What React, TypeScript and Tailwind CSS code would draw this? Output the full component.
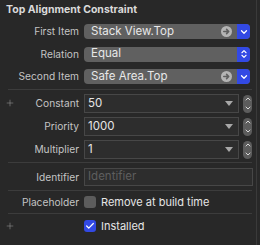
import { ChevronDown, ChevronUp, ChevronsUpDown, Check, Plus } from "lucide-react";

const font = { fontFamily: "Inter, 'Liberation Sans', sans-serif" };

function ArrowCircle() {
  return (
    <svg width="11" height="11" viewBox="0 0 11 11">
      <circle cx="5.5" cy="5.5" r="5.5" fill="#b4b4b4" />
      <path d="M2.8 5.5 H7.6 M5.6 3.4 L7.7 5.5 L5.6 7.6" stroke="#5f5f5f" strokeWidth="1.6" fill="none" strokeLinecap="round" strokeLinejoin="round" />
    </svg>
  );
}

function Stepper() {
  return (
    <div className="w-[9px] h-[18px] rounded-full bg-[#5c5c5c] flex flex-col items-center justify-center gap-[1px]">
      <ChevronUp size={8} strokeWidth={3} className="text-[#d8d8d8]" />
      <ChevronDown size={8} strokeWidth={3} className="text-[#d8d8d8]" />
    </div>
  );
}

function Label({ text, plus }: { text: string; plus?: boolean }) {
  return (
    <div className="w-[84px] shrink-0 flex items-center justify-between pl-[5px] pr-[5px]">
      <span className="w-[10px] flex items-center">
        {plus && <Plus size={10} strokeWidth={1.3} className="text-[#9a9a9a]" />}
      </span>
      <span className="text-[10.2px] text-[#c4c4c4] leading-none">{text}</span>
    </div>
  );
}

function ItemPopup({ value, arrow, updown }: { value: string; arrow?: boolean; updown?: boolean }) {
  return (
    <div className="w-[166px] h-[15px] rounded-[4px] bg-[#606060] flex items-center overflow-hidden">
      <span className="flex-1 pl-[7px] text-[11.5px] text-[#e8e8e8] leading-none">{value}</span>
      {arrow && (
        <span className="mr-[5px] flex">
          <ArrowCircle />
        </span>
      )}
      <span className="w-[13px] h-full bg-[#3249e4] flex items-center justify-center">
        {updown ? (
          <ChevronsUpDown size={10} strokeWidth={2.6} className="text-white" />
        ) : (
          <ChevronDown size={10} strokeWidth={3} className="text-white" />
        )}
      </span>
    </div>
  );
}

function NumberField({ value }: { value: string }) {
  return (
    <div className="flex items-center gap-[4px]">
      <div className="w-[155px] h-[19px] border border-[#474747] bg-[#2d2d2d] flex items-center">
        <span className="flex-1 pl-[3px] text-[11.5px] text-[#e6e6e6] leading-none">{value}</span>
        <span className="mr-[5px] w-0 h-0 border-l-[4px] border-r-[4px] border-t-[5px] border-l-transparent border-r-transparent border-t-[#a8a8a8]" />
      </div>
      <Stepper />
    </div>
  );
}

export default function App() {
  return (
    <div className="w-[260px] h-[245px] bg-[#282828] flex" style={font}>
      <div className="w-[257px] h-full border-r border-[#3a3a3a] flex flex-col">
        {/* Title */}
        <div className="h-[20px] pt-[3px] pl-[6px] text-[10.5px] font-bold text-[#dadada] leading-[13px]">
          Top Alignment Constraint
        </div>

        {/* Items */}
        <div className="flex flex-col gap-[7.5px] mt-[4px]">
          <div className="flex items-center h-[15px]">
            <Label text="First Item" />
            <ItemPopup value="Stack View.Top" arrow />
          </div>
          <div className="flex items-center h-[15px]">
            <Label text="Relation" />
            <ItemPopup value="Equal" updown />
          </div>
          <div className="flex items-center h-[15px]">
            <Label text="Second Item" />
            <ItemPopup value="Safe Area.Top" arrow />
          </div>
        </div>

        <div className="ml-[8px] mr-[4px] h-px bg-[#3c3c3c] mt-[5px]" />

        {/* Numbers */}
        <div className="flex flex-col gap-[4px] mt-[4px]">
          <div className="flex items-center">
            <Label text="Constant" plus />
            <NumberField value="50" />
          </div>
          <div className="flex items-center">
            <Label text="Priority" />
            <NumberField value="1000" />
          </div>
          <div className="flex items-center">
            <Label text="Multiplier" />
            <NumberField value="1" />
          </div>
        </div>

        <div className="ml-[8px] mr-[4px] h-px bg-[#3c3c3c] mt-[3px]" />

        {/* Identifier */}
        <div className="flex items-center mt-[5px]">
          <Label text="Identifier" />
          <div className="w-[169px] h-[18px] border border-[#474747] bg-[#2d2d2d] flex items-center">
            <span className="pl-[3px] text-[11.5px] text-[#5e5e5e] leading-none">Identifier</span>
          </div>
        </div>

        <div className="ml-[8px] mr-[4px] h-px bg-[#3c3c3c] mt-[4px]" />

        {/* Placeholder */}
        <div className="flex items-center h-[12px] mt-[5px]">
          <Label text="Placeholder" />
          <span className="w-[12px] h-[12px] rounded-[3px] bg-[#5c5c5c]" />
          <span className="ml-[5px] text-[11px] text-[#e6e6e6] leading-none">Remove at build time</span>
        </div>

        <div className="ml-[8px] mr-[4px] h-px bg-[#3c3c3c] mt-[5px]" />

        {/* Installed */}
        <div className="flex items-center h-[12px] mt-[6px]">
          <Label text="" plus />
          <span className="w-[12px] h-[12px] rounded-[3px] bg-[#3249e4] flex items-center justify-center">
            <Check size={10} strokeWidth={3} className="text-white" />
          </span>
          <span className="ml-[5px] text-[11px] text-[#e6e6e6] leading-none">Installed</span>
        </div>
      </div>
    </div>
  );
}
